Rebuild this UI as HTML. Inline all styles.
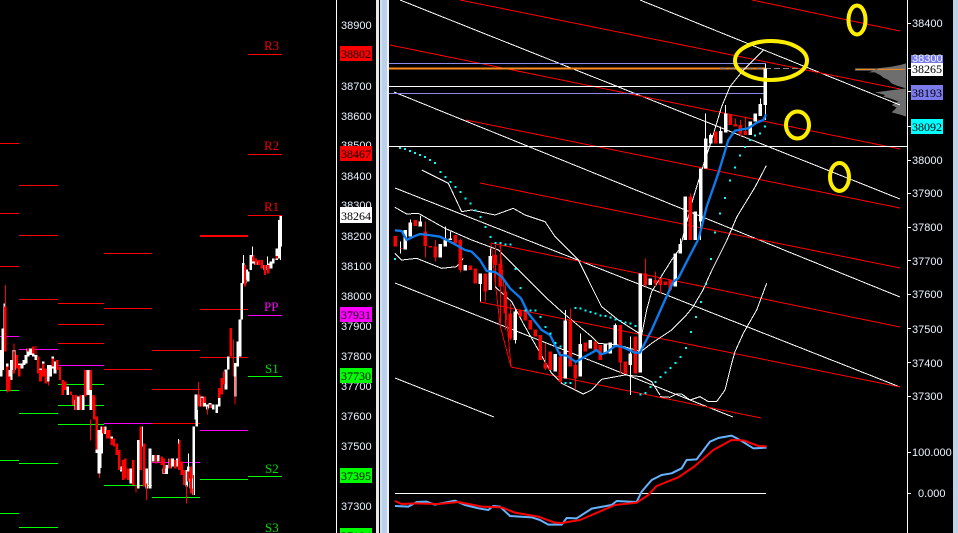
<!DOCTYPE html>
<html><head><meta charset="utf-8"><style>
html,body{margin:0;padding:0;background:#000;width:958px;height:533px;overflow:hidden}
svg{display:block}
.ax{font:11px "Liberation Sans",sans-serif;fill:#eaf4ff}
.tg{font:12px "Liberation Serif",serif;fill:#000}
.lb{font:13px "Liberation Serif",serif}
</style></head><body>
<svg width="958" height="533" viewBox="0 0 958 533" xmlns="http://www.w3.org/2000/svg" fill="none">
<rect width="958" height="533" fill="#000"/>

<!-- LEFT: pivot lines -->
<g stroke-width="1" shape-rendering="crispEdges">
<path stroke="#f00" d="M0 143.5H19M19 185.5H58M0 213.5H19M19 235.5H58M0 266.5H19M104 253.5H152M248 54.5H282M248 154.5H282M248 215.5H282M19 299.5H58M58 303.5H104M104 308.5H152M58 324.5H104M58 343.5H104M104 369.5H152M152 350.5H200M152 389.5H200M200 309.5H248M200 357.5H248M152 423.5H200"/>
<path stroke="#f00" stroke-width="2" d="M200 236H248"/>
<path stroke="#f0f" d="M0 336.5H19M19 349.5H58M58 365.5H104M104 423.5H152M200 430.5H248M152 462.5H200M248 315.5H282"/>
<path stroke="#0f0" d="M0 390.5H19M58 384.5H104M58 405.5H104M19 413.5H58M58 424.5H104M104 485.5H152M152 497.5H200M200 479.5H248M248 376.5H282M248 476.5H282M0 460.5H19M19 463.5H58M0 513.5H19M19 527.5H58"/>
</g>

<!-- LEFT: price section A -->
<g transform="translate(0,280) scale(.3333)" shape-rendering="crispEdges">
<path stroke="#fff" stroke-width="8" d="M4 210V290M8 145V270M14 70V210M22 250V300M28 270V320M34 240V300M42 210V270M50 230V265M58 250V280M66 250V265M72 240V255M78 225V250M84 205V230M92 205V225M100 210V230M108 225V240M122 265V285M130 245V290M137 270V300M145 255V305M152 255V290M158 230V265M165 245V280M188 315V340M203 320V345M228 360V390M235 350V390M250 345V390M264 270V345M272 330V390"/>
<path stroke="#f00" stroke-width="7" d="M16 80V215M22 260V330M28 290V335M42 215V280M50 225V265M58 255V290M84 205V215M100 200V220M115 230V280M122 270V305M130 250V290M137 265V310M158 235V260M172 240V270M180 260V300M188 300V345M196 305V330M212 335V345M220 345V375M228 345V390M242 345V390M256 270V350M272 270V330M280 345V390"/>
<path stroke="#f00" stroke-width="3" d="M16 15V80M22 320V338M42 190V215M108 198V225M118 280V305M145 305V317"/>
</g>
<!-- LEFT: price section B -->
<g transform="translate(0,263) scale(.3333)" shape-rendering="crispEdges">
<path stroke="#fff" stroke-width="8" d="M290 490V570M300 520V615M305 510V570"/>
<path stroke="#f00" stroke-width="7" d="M283 400V470M290 460V560"/>
<path stroke="#f00" stroke-width="3" d="M271 470V533M298 610V645"/>
</g>
<g transform="translate(100,410) scale(.3333)" shape-rendering="crispEdges">
<path stroke="#fff" stroke-width="8" d="M-3 60V190M5 50V130M16 50V72M35 80V100M64 170V185M76 145V205M92 175V220M100 180V215M115 90V235M122 95V175M140 175V235M150 115V235M160 135V155M175 135V155M192 175V192M200 165V192M210 145V175M218 145V170M232 145V170M260 180V230M265 170V200M273 205V235M281 50V255M290 0V50"/>
<path stroke="#f00" stroke-width="7" d="M10 50V70M22 60V85M28 60V85M35 85V105M42 85V110M50 100V135M58 120V180M70 150V210M76 145V205M85 175V210M100 150V225M122 50V180M133 100V230M168 135V160M185 140V165M192 145V190M210 145V175M226 150V175M238 90V180M245 155V195M252 180V225M265 185V215M273 170V250"/>
<path stroke="#f00" stroke-width="3" d="M48 110V135M108 225V248M140 220V270M260 225V280M281 195V255"/>
<path stroke="#fff" stroke-width="3" d="M128 50V110M150 115V140M236 87V100M265 130V170"/>
</g>
<!-- LEFT: price section C -->
<g transform="translate(0,263) scale(.3333)" shape-rendering="crispEdges">
<path stroke="#fff" stroke-width="8" d="M588 395V470M606 400V430M614 410V430M622 425V440M630 420V435M640 425V440M650 425V450M658 380V430M678 320V380M685 280V320M692 200V280M706 300V400M713 235V310M720 170V280M725 60V170M730 0V60M740 20V50"/>
<path stroke="#f00" stroke-width="7" d="M598 395V430M606 405V430M614 400V420M630 425V435M658 375V405M665 345V395M672 325V365M692 195V280M735 15V70"/>
<path stroke="#f00" stroke-width="3" d="M596 357V400M622 430V455M700 230V340M705 340V425"/>
</g>
<g transform="translate(180,200) scale(.3333)" shape-rendering="crispEdges">
<path stroke="#fff" stroke-width="8" d="M195 215V250M205 215V245M212 165V210M220 165V190M228 185V195M245 185V195M255 195V210M265 190V215M273 185V205M280 175V190M290 145V180M298 60V175M302 48V140"/>
<path stroke="#f00" stroke-width="7" d="M195 195V260M220 165V185M228 175V195M236 180V195M245 180V205M255 195V225M265 195V220M290 168V175"/>
<path stroke="#fff" stroke-width="3" d="M190 165V250M217 140V170M262 170V195M302 140V180"/>
</g>

<!-- Left axis -->
<path stroke="#fff" shape-rendering="crispEdges" d="M336.5 0V533"/>
<g class="ax">
<text x="341" y="29">38900</text><text x="341" y="90">38700</text><text x="341" y="120">38600</text><text x="341" y="149">38500</text><text x="341" y="180">38400</text><text x="341" y="209">38300</text><text x="341" y="240">38200</text><text x="341" y="270">38100</text><text x="341" y="300">38000</text><text x="341" y="330">37900</text><text x="341" y="360">37800</text><text x="341" y="390">37700</text><text x="341" y="420">37600</text><text x="341" y="450">37500</text><text x="341" y="510">37300</text>
</g>
<g shape-rendering="crispEdges">
<rect x="340" y="46" width="32" height="15" fill="#f00"/><rect x="340" y="146" width="32" height="15" fill="#f00"/><rect x="340" y="207" width="32" height="16" fill="#fff"/><rect x="340" y="307" width="32" height="15" fill="#f0f"/><rect x="340" y="368" width="32" height="15" fill="#0f0"/><rect x="340" y="468" width="32" height="15" fill="#0f0"/><rect x="340" y="528" width="32" height="15" fill="#0f0"/>
</g>
<g class="tg">
<text x="341" y="58">38802</text><text x="341" y="158">38467</text><text x="341" y="220">38264</text><text x="341" y="319">37931</text><text x="341" y="380">37730</text><text x="341" y="480">37395</text><text x="341" y="540">37194</text>
</g>
<g class="lb">
<text x="264" y="50" fill="#e00">R3</text><text x="264" y="150" fill="#e00">R2</text><text x="264" y="211" fill="#f00">R1</text><text x="264" y="311" fill="#f0f">PP</text><text x="265" y="373" fill="#0d0">S1</text><text x="265" y="473" fill="#0d0">S2</text><text x="265" y="532" fill="#0d0">S3</text>
</g>

<!-- Separator / scrollbar -->
<g shape-rendering="crispEdges">
<rect x="376" width="3" height="533" fill="#e8e8e8"/>
<rect x="380" width="8" height="533" fill="#b9d1ea"/>
<rect x="380" width="2" height="533" fill="#cfe0f2"/>
<rect x="387" width="2" height="533" fill="#f0f0f0"/>
<rect x="953" width="5" height="533" fill="#bcd3ec"/>
</g>

<!-- volume profile -->
<g transform="translate(850,55) scale(.3333)">
<path fill="#6e6e6e" d="M168 25L150 30 125 35 80 40 15 40 15 47 70 47 55 52 75 52 90 60 100 68 115 75 125 85 140 92 168 100 130 105 75 112 105 120 100 125 125 132 145 140 125 150 140 158 125 172 155 180 168 185Z"/>
<path stroke="#ff8c1a" stroke-width="3" d="M18 43H75M83 43H165"/>
</g>

<!-- RIGHT: channels -->
<g stroke-width="1" shape-rendering="crispEdges">
<path stroke="#fff" d="M640 0L900 105M400 0L900 199M394 92L900 297M395 188L900 387M395 283L733 417M395 378L494 417"/>
<path stroke="#f00" d="M752 0L900 31M460 0L900 89M390 45L900 149M466 120L900 208M480 183L900 268M491 243L900 327M480 302L900 387M511 367L761 418M491 243L500 325 511 367M500 245L511 367"/>
</g>
<g shape-rendering="crispEdges">
<path stroke="#8b8bea" d="M389 63.5H765M389 93.5H765"/>
<path stroke="#ff8c1a" stroke-width="2" d="M389 68.5H765"/>
<path stroke="#fff" d="M389 86.5H765M389 146.5H907"/>
<path stroke="#888" stroke-dasharray="6 3" d="M720 68.5H800"/>
</g>

<!-- Right chart main (zoom coords) -->
<g transform="translate(385,170) scale(.3333)">
<g stroke="#fff" stroke-width="3" fill="none" shape-rendering="crispEdges">
<path d="M110 0L190 40 230 125 260 120 330 135 385 115 420 135 480 155 510 200 580 270 610 330 650 410 700 450 770 495 785 420 800 365 860 270 885 235 920 100 960 -30"/>
<path d="M30 112L65 132 100 130 180 175 260 210 340 240 410 310 480 380 530 425 560 450 620 500 640 520 700 525 768 545 800 520 860 480 900 440 924 411 954 360 981 300 1026 210 1056 140 1111 50 1144 -13"/>
<path d="M30 250L50 270 95 265 170 295 215 290 235 265 M330 350L380 395 420 470 460 540 500 610 530 640 595 672 620 660 650 628 720 615 770 620 800 635 825 675"/>
<path d="M46 215V250M76 148V200M106 138V170M181 170V230M196 185V210M286 310V395M316 235V360M391 415V520M541 420V625M586 490V620M691 460V528M736 500V675M871 250V350M886 205V250"/>
</g>
<g stroke="#f00" stroke-width="3" shape-rendering="crispEdges">
<path d="M121 155V262M151 210V275M226 205V308M301 310V395M331 225V350M346 222V460M361 340V480M376 400V510M481 520V600M526 545V640M556 415V590M571 575V660M706 465V610M751 500V610M781 265V350M811 305V350M826 325V370M856 330V365M46 235H52"/>
</g>
<g stroke="#f00" stroke-width="10" shape-rendering="crispEdges">
<path d="M31 198V230M91 150V168M121 185V228M136 228V232M151 230V262M211 195V220M226 210V300M256 287V300M271 295V340M301 310V365M331 255V285M346 280V350M361 365V430M376 430V505M406 420V440M421 420V452M436 450V478M451 478V500M466 495V570M481 580V595M496 545V600M526 560V635M556 450V590M571 585V625M601 518V545M631 515V545M646 525V570M706 465V578M721 575V612M751 500V610M781 310V345M811 330V340M826 325V345M841 335V345M856 330V360"/>
</g>
<g stroke="#fff" stroke-width="10" shape-rendering="crispEdges">
<path d="M61 180V238M76 158V200M106 155V170M166 222V263M181 205V230M196 205V210M241 285V302M286 310V342M316 258V360M391 425V510M511 552V605M541 452V625M586 522V620M616 510V535M661 520V550M676 518V550M691 465V528M736 550V585M766 310V608M796 325V345M871 250V350M886 222V250"/>
</g>
<path stroke="#0a7cf0" stroke-width="7" stroke-linejoin="round" d="M30 181L50 183 65 210 85 200 105 192 130 195 165 200 195 215 240 240 260 245 285 270 305 303 330 306 350 320 375 355 408 385 430 430 470 480 495 495 525 555 545 557 572 576 600 560 635 540 648 553 665 548 690 528 710 530 750 548 765 548 800 480 840 390 865 335 880 325 900 285 939 210"/>
<g fill="#0ff" shape-rendering="crispEdges">
<path d="M164 3h6v6h-6zM179 18h6v6h-6zM194 33h6v6h-6zM209 48h6v6h-6zM224 63h6v6h-6zM239 83h6v6h-6zM254 98h6v6h-6zM269 118h6v6h-6zM284 138h6v6h-6zM299 168h6v6h-6zM314 198h6v6h-6zM329 216h6v6h-6zM344 216h6v6h-6zM359 220h6v6h-6zM374 220h6v6h-6zM389 294h6v6h-6zM404 351h6v6h-6zM419 418h6v6h-6zM434 418h6v6h-6zM449 418h6v6h-6zM464 438h6v6h-6zM479 468h6v6h-6zM494 488h6v6h-6zM509 516h6v6h-6zM524 526h6v6h-6zM539 636h6v6h-6zM554 636h6v6h-6zM569 411h6v6h-6zM584 413h6v6h-6zM599 418h6v6h-6zM614 423h6v6h-6zM629 428h6v6h-6zM644 433h6v6h-6zM659 435h6v6h-6zM674 440h6v6h-6zM689 445h6v6h-6zM704 450h6v6h-6zM719 455h6v6h-6zM734 458h6v6h-6zM749 465h6v6h-6zM764 670h6v6h-6zM779 666h6v6h-6zM794 648h6v6h-6zM809 633h6v6h-6zM824 618h6v6h-6zM839 605h6v6h-6zM854 591h6v6h-6zM869 576h6v6h-6zM884 558h6v6h-6zM27 264h6v6h-6z"/>
</g>
</g>
<g fill="#0ff" shape-rendering="crispEdges">
<path d="M399 147h2v2h-2zM404 148h2v2h-2zM409 150h2v2h-2zM414 152h2v2h-2zM419 154h2v2h-2zM424 156h2v2h-2zM429 159h2v2h-2zM434 162h2v2h-2zM685 347h2v2h-2zM690 331h2v2h-2zM695 316h2v2h-2zM700 301h2v2h-2zM705 283h2v2h-2zM710 258h2v2h-2z"/>
</g>

<!-- Lower band tail -->
<g transform="translate(660,270) scale(.3333)" stroke="#fff" stroke-width="3" shape-rendering="crispEdges">
<path d="M0 380L30 382 50 372 65 372 90 390 120 380 145 395 170 395 195 360 215 280 225 245 250 190 290 120 320 40"/>
</g>

<!-- Right chart upper (zoom 3 coords) -->
<g transform="translate(640,0) scale(.3333)" shape-rendering="crispEdges">
<path stroke="#fff" stroke-width="3" d="M195 480L215 420 245 320 270 260 310 210 370 150"/>
<g stroke="#fff" stroke-width="3" fill="none">
<path d="M197 340V480M212 400V430M242 380V430M257 315V398M331 365V405M346 340V365M361 295V348M376 190V360M136 590V720M182 505V720"/>
</g>
<g stroke="#f00" stroke-width="3"><path d="M151 580V720M286 355V380M301 360V410M316 350V405M271 342V375"/></g>
<g stroke="#fff" stroke-width="10">
<path d="M136 590V720M166 635V720M182 505V665M197 415V505M212 405V430M242 393V430M257 340V398M331 365V405M346 340V365M361 312V348M376 205V315"/>
</g>
<g stroke="#f00" stroke-width="10">
<path d="M151 590V720M227 395V430M271 342V375M286 372V380M301 375V400M316 393V405"/>
</g>
<path stroke="#0a7cf0" stroke-width="7" stroke-linejoin="round" shape-rendering="auto" d="M175 720L200 620 235 520 265 420 285 392 325 385 350 368 370 360 378 343"/>
<g fill="#0ff">
<path d="M222 695h6v6h-6zM237 638h6v6h-6zM252 591h6v6h-6zM267 539h6v6h-6zM282 500h6v6h-6zM297 464h6v6h-6zM312 438h6v6h-6zM327 417h6v6h-6zM342 404h6v6h-6zM357 397h6v6h-6zM372 377h6v6h-6z"/>
</g>
</g>

<!-- MACD -->
<g transform="translate(385,400) scale(.3333)">
<path stroke="#fff" stroke-width="3" shape-rendering="crispEdges" d="M30 280H1143"/>
<path stroke="#66b3ff" stroke-width="6" stroke-linejoin="round" d="M30 318L70 320 95 306 125 305 150 314 180 308 210 302 240 315 280 325 310 330 325 318 345 320 375 348 440 352 465 360 490 374 530 374 545 354 575 355 620 326 680 315 695 303 755 306 770 275 800 240 830 225 860 220 890 205 905 180 935 178 975 125 1000 114 1040 107 1065 120 1105 145 1145 143"/>
<path stroke="#f00" stroke-width="6" stroke-linejoin="round" d="M30 303L50 312 90 310 160 312 220 306 290 320 350 322 390 338 460 350 510 368 530 369 585 360 690 315 755 308 790 285 815 258 880 232 930 198 985 150 1040 120 1075 121 1120 138 1145 139"/>
</g>

<!-- Yellow ellipses -->
<g stroke="#ffee00" stroke-width="4">
<ellipse cx="771" cy="60.5" rx="36" ry="19.5"/>
<ellipse cx="857" cy="20" rx="8.5" ry="14.5"/>
<ellipse cx="797.5" cy="125" rx="11.5" ry="13.5"/>
<ellipse cx="839.5" cy="177" rx="9.5" ry="14"/>
</g>

<!-- Right axis -->
<path stroke="#fff" shape-rendering="crispEdges" d="M907.5 0V533M908 23.5h3M908 126.5h3M908 160.5h3M908 193.5h3M908 227.5h3M908 260.5h3M908 294.5h3M908 328.5h3M908 362.5h3M908 396.5h3M908 452.5h3M908 493.5h3M908 91.5h3M908 68.5h3"/>
<g class="ax">
<text x="912" y="27">38400</text><text x="912" y="164">38000</text><text x="912" y="197">37900</text><text x="912" y="231">37800</text><text x="912" y="265">37700</text><text x="912" y="298">37600</text><text x="912" y="333">37500</text><text x="912" y="367">37400</text><text x="912" y="400">37300</text><text x="912" y="456">100.000</text><text x="918" y="497">0.000</text>
</g>
<g shape-rendering="crispEdges">
<rect x="911" y="55" width="32" height="9" fill="#7b7bee"/>
</g>
<text class="ax" x="912" y="62">38300</text>
<g shape-rendering="crispEdges">
<rect x="911" y="63" width="32" height="13" fill="#fff"/>
<rect x="911" y="85" width="32" height="15" fill="#7b7bee"/>
<rect x="911" y="119" width="32" height="15" fill="#0ff"/>
</g>
<g class="tg">
<text x="912" y="73">38265</text><text x="912" y="97">38193</text><text x="912" y="131">38092</text>
</g>
</svg>
</body></html>
